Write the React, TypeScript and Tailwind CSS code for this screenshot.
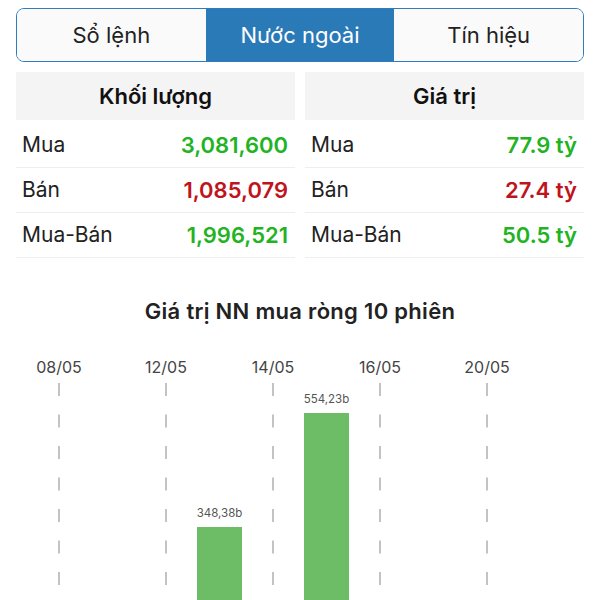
import React from "react";

const font = { fontFamily: "Inter, 'Noto Sans', sans-serif" };

const tabs = ["Sổ lệnh", "Nước ngoài", "Tín hiệu"];

type Row = { label: string; value: string; up: boolean };

const volumeRows: Row[] = [
	{ label: "Mua", value: "3,081,600", up: true },
	{ label: "Bán", value: "1,085,079", up: false },
	{ label: "Mua-Bán", value: "1,996,521", up: true },
];

const valueRows: Row[] = [
	{ label: "Mua", value: "77.9 tỷ", up: true },
	{ label: "Bán", value: "27.4 tỷ", up: false },
	{ label: "Mua-Bán", value: "50.5 tỷ", up: true },
];

function StatColumn({ title, rows }: { title: string; rows: Row[] }) {
	return (
		<div className="flex flex-1 flex-col">
			<div className="flex h-12 items-center justify-center bg-[#f4f4f4] text-[22px] font-semibold text-[#111]">{title}</div>
			<div className="pt-[3px]">
				{rows.map((r) => (
					<div key={r.label} className="flex h-[45px] items-center justify-between border-b border-[#eeeeee] pl-[6px] pr-[7px]">
						<span className="text-[21px] text-[#222]">{r.label}</span>
						<span className={r.up ? "text-[22px] font-semibold text-[#22b322]" : "text-[22px] font-semibold text-[#c0141c]"}>{r.value}</span>
					</div>
				))}
			</div>
		</div>
	);
}

const dates = [
	{ label: "08/05", x: 59 },
	{ label: "12/05", x: 166 },
	{ label: "14/05", x: 273 },
	{ label: "16/05", x: 380 },
	{ label: "20/05", x: 487 },
];

// bars are drawn in page coordinates, svg starts at y = 340
const bars = [
	{ x: 197, w: 45, top: 527, label: "348,38b" },
	{ x: 304, w: 45, top: 413, label: "554,23b" },
];

function NetBuyChart() {
	const y0 = 340;
	return (
		<svg width="600" height="260" viewBox="0 0 600 260" className="block">
			{dates.map((d) => (
				<g key={d.label}>
					<text x={d.x} y={367 - y0 + 5.5} textAnchor="middle" fontSize="16" fill="#444" style={font}>
						{d.label}
					</text>
					<line
						x1={d.x}
						x2={d.x}
						y1={383 - y0}
						y2={260}
						stroke="#b0b0b0"
						strokeWidth="1.5"
						strokeDasharray="13 18.5"
					/>
				</g>
			))}
			{bars.map((b) => (
				<g key={b.label}>
					<rect x={b.x} y={b.top - y0} width={b.w} height={260 - (b.top - y0)} fill="#6dbd67" />
					<text x={b.x + b.w / 2} y={b.top - y0 - 10} textAnchor="middle" fontSize="11.5" fill="#555" style={font}>
						{b.label}
					</text>
				</g>
			))}
		</svg>
	);
}

export default function App() {
	return (
		<div className="h-[600px] w-[600px] overflow-hidden bg-white" style={font}>
			<div className="px-4 pt-2">
				<div className="flex h-[54px] overflow-hidden rounded-lg border-[1.5px] border-[#2e7cbf]">
					{tabs.map((t, i) => (
						<div
							key={t}
							className={
								i === 1
									? "flex flex-1 items-center justify-center bg-[#2a7ab8] text-[22px] text-white"
									: "flex flex-1 items-center justify-center bg-[#fafafa] text-[22px] text-[#222]"
							}
						>
							{t}
						</div>
					))}
				</div>
				<div className="mt-[10px] flex gap-[10px]">
					<StatColumn title="Khối lượng" rows={volumeRows} />
					<StatColumn title="Giá trị" rows={valueRows} />
				</div>
				<div className="mt-[39px] text-center text-[22px] leading-[28px] font-semibold tracking-[0.3px] text-[#222]">
					Giá trị NN mua ròng 10 phiên
				</div>
			</div>
			<div className="mt-[15px]">
				<NetBuyChart />
			</div>
		</div>
	);
}
